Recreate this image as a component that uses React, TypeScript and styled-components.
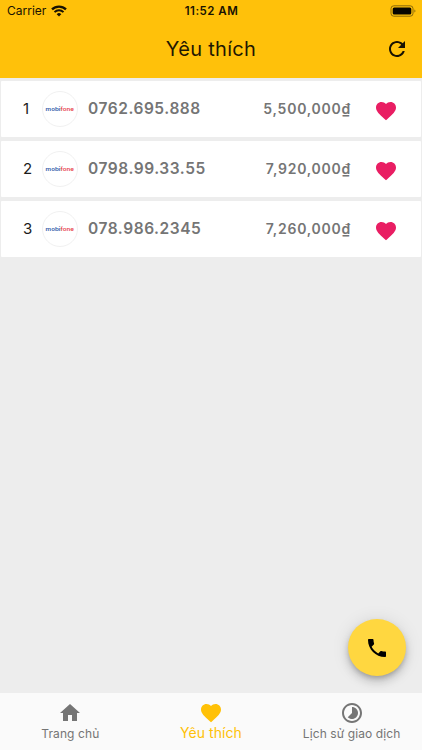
import React from "react";
import styled, { createGlobalStyle } from "styled-components";

const Global = createGlobalStyle`
  * { box-sizing: border-box; }
  body { margin: 0; font-family: Inter, "Noto Sans", sans-serif; }
`;

const Screen = styled.div`
  position: relative;
  display: flex;
  flex-direction: column;
  width: 422px;
  height: 750px;
  overflow: hidden;
  background: #ededed;
`;

const Header = styled.header`
  height: 78px;
  flex: none;
  background: #ffc10a;
  color: #1f1802;
`;

const StatusBar = styled.div`
  display: grid;
  grid-template-columns: 1fr auto 1fr;
  align-items: center;
  height: 21px;
  padding: 0 6px 0 7px;
  color: #181202;
`;

const Carrier = styled.div`
  display: flex;
  align-items: center;
  gap: 5px;
  font-size: 12px;
  letter-spacing: 0;
`;

const Clock = styled.div`
  font-size: 11.5px;
  font-weight: 600;
  letter-spacing: 0.5px;
`;

const Battery = styled.svg`
  justify-self: end;
`;

const TitleBar = styled.div`
  display: grid;
  grid-template-columns: 1fr auto 1fr;
  align-items: center;
  height: 57px;
  padding: 0 13px 2px 13px;
`;

const Title = styled.h1`
  grid-column: 2;
  margin: 0;
  font-size: 20px;
  font-weight: 400;
  line-height: 24px;
  letter-spacing: 0.3px;
`;

const RefreshButton = styled.button`
  justify-self: end;
  display: flex;
  padding: 0;
  border: 0;
  background: none;
  color: #181202;
`;

const List = styled.main`
  flex: 1;
  display: flex;
  flex-direction: column;
  gap: 4px;
  padding: 3px 1px 0;
`;

const Row = styled.article`
  display: flex;
  align-items: center;
  height: 56px;
  padding: 0 23px 0 22px;
  background: #fff;
  border-radius: 1px;
`;

const Index = styled.span`
  width: 19px;
  font-size: 15px;
  line-height: 18px;
  color: #1c1c1c;
`;

const Badge = styled.span`
  display: flex;
  align-items: center;
  justify-content: center;
  width: 36px;
  height: 36px;
  border: 1px solid #f1f1f1;
  border-radius: 50%;
`;

const PhoneNumber = styled.span`
  margin: 0 0 0 10px;
  font-size: 15.5px;
  line-height: 18px;
  font-weight: 600;
  letter-spacing: 0.55px;
  color: #757575;
`;

const Price = styled.span`
  margin: 0 0 2px auto;
  font-size: 14px;
  font-weight: 600;
  letter-spacing: 0.75px;
  color: #757575;
`;

const Favourite = styled.span`
  display: flex;
  margin: 4px 0 0 23px;
  color: #e91e63;
`;

const CallButton = styled.button`
  position: absolute;
  right: 16px;
  bottom: 74px;
  display: flex;
  align-items: center;
  justify-content: center;
  width: 58px;
  height: 57px;
  padding: 0;
  border: 0;
  border-radius: 50%;
  background: #ffd740;
  color: #000;
  box-shadow: 0 3px 5px -1px rgba(0, 0, 0, 0.2), 0 6px 10px rgba(0, 0, 0, 0.14),
    0 1px 18px rgba(0, 0, 0, 0.1);
`;

const Nav = styled.nav`
  position: relative;
  display: grid;
  grid-template-columns: repeat(3, 1fr);
  flex: none;
  height: 57px;
  background: #fafafa;
`;

const Tab = styled.div<{ $active?: boolean }>`
  display: flex;
  flex-direction: column;
  align-items: center;
  padding-top: 8px;
  color: ${(p) => (p.$active ? "#ffc107" : "#757575")};
  font-size: ${(p) => (p.$active ? "14px" : "12px")};
  letter-spacing: ${(p) => (p.$active ? "0.05px" : "0.1px")};
  line-height: ${(p) => (p.$active ? "16px" : "17px")};
`;

const paths = {
  home: "M10 20v-6h4v6h5v-8h3L12 3 2 12h3v8z",
  heart:
    "M12 21.35l-1.45-1.32C5.4 15.36 2 12.28 2 8.5 2 5.42 4.42 3 7.5 3c1.74 0 3.41.81 4.5 2.09C13.09 3.81 14.76 3 16.5 3 19.58 3 22 5.42 22 8.5c0 3.78-3.4 6.86-8.55 11.54L12 21.35z",
  refresh:
    "M17.65 6.35C16.2 4.9 14.21 4 12 4c-4.42 0-7.99 3.58-7.99 8s3.57 8 7.99 8c3.73 0 6.84-2.55 7.73-6h-2.08c-.82 2.33-3.04 4-5.65 4-3.31 0-6-2.69-6-6s2.69-6 6-6c1.66 0 3.14.69 4.22 1.78L13 11h7V4l-2.35 2.35z",
  history:
    "M16.24 7.76C15.07 6.59 13.54 6 12 6v6l-4.24 4.24c2.34 2.34 6.14 2.34 8.49 0 2.34-2.34 2.34-6.14-.01-8.48zM12 2C6.48 2 2 6.48 2 12s4.48 10 10 10 10-4.48 10-10S17.52 2 12 2zm0 18c-4.42 0-8-3.58-8-8s3.58-8 8-8 8 3.58 8 8-3.58 8-8 8z",
  call: "M6.62 10.79c1.44 2.83 3.76 5.14 6.59 6.59l2.2-2.2c.27-.27.67-.36 1.02-.24 1.12.37 2.33.57 3.57.57.55 0 1 .45 1 1V20c0 .55-.45 1-1 1-9.39 0-17-7.61-17-17 0-.55.45-1 1-1h3.5c.55 0 1 .45 1 1 0 1.25.2 2.45.57 3.57.11.35.03.74-.25 1.02l-2.2 2.2z",
};

function Icon({ name, size = 24 }: { name: keyof typeof paths; size?: number }) {
  return (
    <svg width={size} height={size} viewBox="0 0 24 24" fill="currentColor" aria-hidden>
      <path d={paths[name]} />
    </svg>
  );
}

function Wifi() {
  return (
    <svg width="16" height="12" viewBox="0 0 16 12" fill="none" stroke="#181202" aria-hidden>
      <path d="M1 4.4a10 10 0 0 1 14 0" strokeWidth="2.3" />
      <path d="M3.5 7.1a6.4 6.4 0 0 1 9 0" strokeWidth="2" />
      <path d="M8 11.6 5.7 9.2a3.3 3.3 0 0 1 4.6 0z" fill="#181202" stroke="none" />
    </svg>
  );
}

const LogoWord = styled.span<{ $red?: boolean }>`
  font-size: 6px;
  font-weight: 600;
  line-height: 8px;
  color: ${(p) => (p.$red ? "#e83f4c" : "#2f5aa8")};
`;

const Logo = styled.span`
  display: flex;
  flex: none;
  transform: translateY(0.5px) scale(1.03, 0.85);
`;

const entries = [
  { phone: "0762.695.888", price: "5,500,000₫" },
  { phone: "0798.99.33.55", price: "7,920,000₫" },
  { phone: "078.986.2345", price: "7,260,000₫" },
];

export default function App() {
  return (
    <>
      <Global />
      <Screen>
        <Header>
          <StatusBar>
            <Carrier>
              Carrier <Wifi />
            </Carrier>
            <Clock>11:52 AM</Clock>
            <Battery width="26" height="12" viewBox="0 0 26 12">
              <rect x="1" y="0.8" width="22" height="10.4" rx="2.8" fill="none" stroke="#8c6a08" />
              <rect x="2.7" y="2.4" width="18.6" height="7.2" rx="1.5" fill="#080600" />
              <path d="M24.4 4.4v3.2q1-.4 1-1.6t-1-1.6z" fill="#8c6a08" />
            </Battery>
          </StatusBar>
          <TitleBar>
            <Title>Yêu thích</Title>
            <RefreshButton aria-label="Refresh">
              <Icon name="refresh" />
            </RefreshButton>
          </TitleBar>
        </Header>
        <List>
          {entries.map((e, i) => (
            <Row key={e.phone}>
              <Index>{i + 1}</Index>
              <Badge>
                <Logo>
                  <LogoWord>mobi</LogoWord>
                  <LogoWord $red>fone</LogoWord>
                </Logo>
              </Badge>
              <PhoneNumber>{e.phone}</PhoneNumber>
              <Price>{e.price}</Price>
              <Favourite>
                <Icon name="heart" />
              </Favourite>
            </Row>
          ))}
        </List>
        <CallButton aria-label="Call">
          <Icon name="call" />
        </CallButton>
        <Nav>
          <Tab>
            <Icon name="home" />
            Trang chủ
          </Tab>
          <Tab $active>
            <Icon name="heart" />
            Yêu thích
          </Tab>
          <Tab>
            <Icon name="history" />
            Lịch sử giao dịch
          </Tab>
        </Nav>
      </Screen>
    </>
  );
}
